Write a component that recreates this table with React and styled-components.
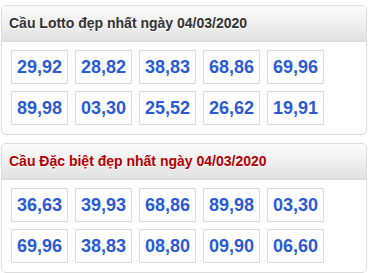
import React from "react";
import styled, { createGlobalStyle } from "styled-components";

const Global = createGlobalStyle`
  html, body { margin: 0; padding: 0; background: #fff; }
  body { font-family: "Liberation Sans", Arial, sans-serif; }
`;

const Page = styled.div`
  display: flex;
  flex-direction: column;
  gap: 8px;
  padding: 5px 2px 0 1px;
  width: 366px;
`;

const Card = styled.section`
  border: 1px solid #dcdcdc;
  border-radius: 5px;
  overflow: hidden;
  background: #fff;
`;

const Header = styled.h2`
  margin: 0;
  height: 36px;
  box-sizing: border-box;
  display: flex;
  align-items: center;
  padding: 0 0 1px 7px;
  font-size: 14px;
  font-weight: bold;
  color: ${(p) => (p.$red ? "#b30000" : "#333")};
  text-shadow: 0 1px 0 #fff;
  background: linear-gradient(to bottom, #fbfbfb 0%, #f1f1f1 45%, #e0e0e0 100%);
  border-bottom: 1px solid #dadada;
`;

const Grid = styled.div`
  display: grid;
  grid-template-columns: repeat(5, 57px);
  grid-auto-rows: 34px;
  column-gap: 7px;
  row-gap: 7px;
  padding: 8px 0 9px 9px;
`;

const Cell = styled.div`
  box-sizing: border-box;
  border: 1px solid #dcdcdc;
  display: flex;
  align-items: center;
  justify-content: center;
  font-size: 18px;
  font-weight: bold;
  color: #2a5bd4;
`;

const data = [
  {
    title: "Cầu Lotto đẹp nhất ngày 04/03/2020",
    red: false,
    nums: ["29,92", "28,82", "38,83", "68,86", "69,96", "89,98", "03,30", "25,52", "26,62", "19,91"],
  },
  {
    title: "Cầu Đặc biệt đẹp nhất ngày 04/03/2020",
    red: true,
    nums: ["36,63", "39,93", "68,86", "89,98", "03,30", "69,96", "38,83", "08,80", "09,90", "06,60"],
  },
];

export default function App() {
  return (
    <>
      <Global />
      <Page>
        {data.map((d) => (
          <Card key={d.title}>
            <Header $red={d.red}>{d.title}</Header>
            <Grid>
              {d.nums.map((n, i) => (
                <Cell key={i}>{n}</Cell>
              ))}
            </Grid>
          </Card>
        ))}
      </Page>
    </>
  );
}
